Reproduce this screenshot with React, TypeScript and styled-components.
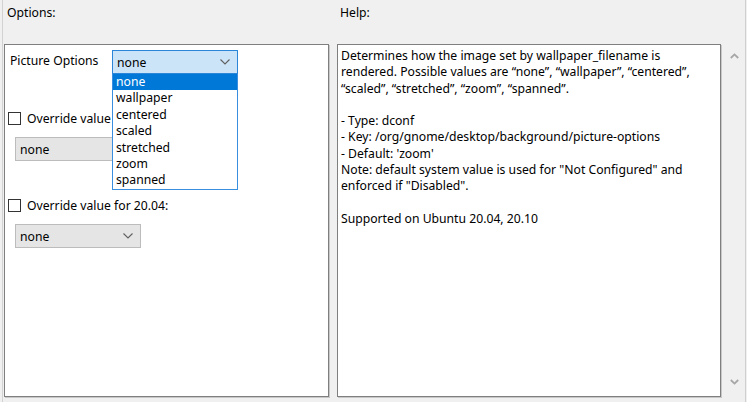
import styled, { createGlobalStyle } from "styled-components";

const GlobalStyle = createGlobalStyle`
  html, body {
    margin: 0;
    padding: 0;
    background: #f0f0f0;
  }
  body {
    font-family: "Noto Sans", "Liberation Sans", sans-serif;
    font-size: 12.2px;
    color: #000;
  }
`;

const pictureOptions = ["none", "wallpaper", "centered", "scaled", "stretched", "zoom", "spanned"];

function Chevron({ color = "#606060" }: { color?: string }) {
  return (
    <svg width="10" height="6" viewBox="0 0 10 6">
      <path d="M0.5 0.5 L5 5 L9.5 0.5" fill="none" stroke={color} strokeWidth="1.1" />
    </svg>
  );
}

function ScrollArrow({ down }: { down?: boolean }) {
  return (
    <svg width="9" height="6" viewBox="0 0 9 6">
      <path
        d={down ? "M0.8 1 L4.5 4.6 L8.2 1" : "M0.8 5 L4.5 1.4 L8.2 5"}
        fill="none"
        stroke="#a6a6a6"
        strokeWidth="1.8"
      />
    </svg>
  );
}

export default function App() {
  return (
    <>
      <GlobalStyle />
      <Frame>
        <Caption>Options:</Caption>
        <Caption>Help:</Caption>

        <OptionsPanel>
          <SettingRow>
            <SettingLabel>Picture Options</SettingLabel>
            <ComboWrap>
              <Combo $focused>
                <span>none</span>
                <Chevron />
              </Combo>
              <DropList>
                {pictureOptions.map((o, i) => (
                  <DropItem key={o} $selected={i === 0}>
                    {o}
                  </DropItem>
                ))}
              </DropList>
            </ComboWrap>
          </SettingRow>

          <Override>
            <CheckRow>
              <CheckBox />
              <CheckText $clip>Override value for 20.10:</CheckText>
            </CheckRow>
            <Combo>
              <span>none</span>
              <Chevron />
            </Combo>
          </Override>

          <Override>
            <CheckRow>
              <CheckBox />
              <CheckText>Override value for 20.04:</CheckText>
            </CheckRow>
            <Combo>
              <span>none</span>
              <Chevron />
            </Combo>
          </Override>
        </OptionsPanel>

        <HelpColumn>
          <HelpBox>
            <p>
              Determines how the image set by wallpaper_filename is rendered. Possible values are
              “none”, “wallpaper”, “centered”, “scaled”, “stretched”, “zoom”, “spanned”.
            </p>
            <p>
              - Type: dconf
              <br />- Key: /org/gnome/desktop/background/picture-options
              <br />- Default: 'zoom'
              <br />
              Note: default system value is used for "Not Configured" and enforced if "Disabled".
            </p>
            <p>Supported on Ubuntu 20.04, 20.10</p>
          </HelpBox>
          <ScrollBar>
            <ScrollArrow />
            <ScrollArrow down />
          </ScrollBar>
        </HelpColumn>
      </Frame>
    </>
  );
}

const Frame = styled.div`
  box-sizing: border-box;
  width: 744px;
  height: 402px;
  margin-left: 2px;
  padding: 0 0 5px 1px;
  border-left: 1px solid #d2d2d2;
  border-right: 1px solid #cfcfcf;
  display: grid;
  grid-template-columns: 325px 408px;
  grid-template-rows: 44px 353px;
  column-gap: 8px;
`;

const Caption = styled.div`
  padding: 5px 0 0 3px;
  line-height: 16px;
`;

const OptionsPanel = styled.div`
  box-sizing: border-box;
  background: #fff;
  border: 1px solid #7f7f7f;
  box-shadow: 1px 1px 0 #c8c8c8;
  padding: 5px 0 0 3px;
  position: relative;
`;

const SettingRow = styled.div`
  display: flex;
  align-items: flex-start;
`;

const SettingLabel = styled.div`
  box-sizing: border-box;
  width: 104px;
  padding: 3px 0 0 2px;
  line-height: 16px;
  flex-shrink: 0;
`;

const ComboWrap = styled.div`
  position: relative;
  z-index: 2;
`;

const Combo = styled.div<{ $focused?: boolean }>`
  box-sizing: border-box;
  width: 126px;
  height: 24px;
  display: flex;
  align-items: center;
  justify-content: space-between;
  padding: 0 7px 0 4px;
  background: ${(p) => (p.$focused ? "#cce4f7" : "#e5e5e5")};
  border: 1px solid ${(p) => (p.$focused ? "#2b85d8" : "#bcbcbc")};
  margin-left: ${(p) => (p.$focused ? "0" : "7px")};
`;

const DropList = styled.div`
  position: absolute;
  top: 100%;
  left: 0;
  width: 126px;
  box-sizing: border-box;
  background: #fff;
  border: 1px solid #3a8ee0;
  border-top: none;
`;

const DropItem = styled.div<{ $selected?: boolean }>`
  height: 16.4px;
  line-height: 16px;
  padding-left: 3px;
  background: ${(p) => (p.$selected ? "#0078d7" : "transparent")};
  color: ${(p) => (p.$selected ? "#fff" : "#000")};
`;

const Override = styled.div`
  display: flex;
  flex-direction: column;
  gap: 11px;
  margin-top: 36px;
`;

const CheckRow = styled.div`
  display: flex;
  align-items: center;
  gap: 6px;
  height: 16px;
  white-space: nowrap;
`;

const CheckText = styled.span<{ $clip?: boolean }>`
  overflow: hidden;
  max-width: ${(p) => (p.$clip ? "84px" : "none")};
`;

const CheckBox = styled.span`
  box-sizing: border-box;
  width: 13px;
  height: 13px;
  border: 1px solid #333;
  background: #fff;
  flex-shrink: 0;
`;

const HelpColumn = styled.div`
  display: grid;
  grid-template-columns: 384px 24px;
`;

const HelpBox = styled.div`
  box-sizing: border-box;
  background: #fff;
  border: 1px solid #7f7f7f;
  box-shadow: 1px 1px 0 #c8c8c8;
  padding: 3px 12px 0 3px;
  line-height: 16.3px;

  p {
    margin: 0 0 16.3px;
  }
`;

const ScrollBar = styled.div`
  display: flex;
  flex-direction: column;
  align-items: center;
  justify-content: space-between;
  padding: 9px 0 12px 3px;
`;
